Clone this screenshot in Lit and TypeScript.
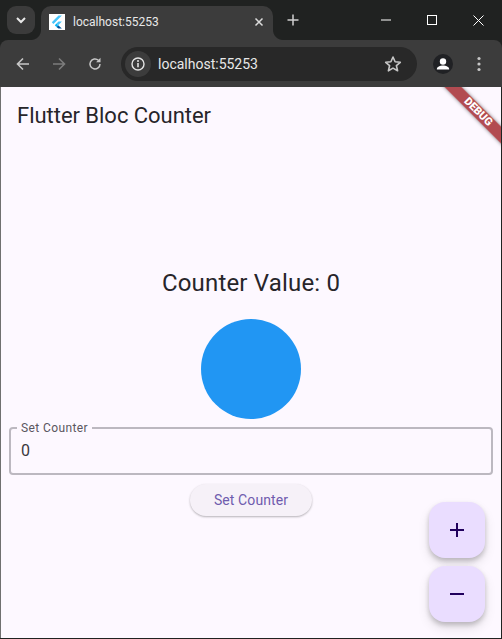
import { LitElement, html, css } from "lit";
import { customElement } from "lit/decorators.js";

@customElement("app-root")
export class AppRoot extends LitElement {
  static styles = css`
    :host { display: flex; flex-direction: column; width: 502px; height: 639px; overflow: hidden; box-sizing: border-box; background: #202221; font-family: Roboto, "Liberation Sans", sans-serif; }
    .titlebar { height: 40px; display: flex; align-items: flex-start; background: #202221; padding: 6px 1px 0 7px; box-sizing: border-box; flex: none; }
    .tabsearch { width: 28px; height: 28px; border-radius: 9px; background: #3b3b3b; display: flex; align-items: center; justify-content: center; margin-right: 6px; flex: none; }
    .tab { position: relative; width: 232px; height: 34px; background: #3c3c3c; border-radius: 10px 10px 0 0; display: flex; align-items: center; padding: 0 0 3px 8px; box-sizing: border-box; color: #e8e8e8; font-size: 12px; flex: none; }
    .tab::after { content: ""; position: absolute; right: -10px; bottom: 0; width: 10px; height: 10px; background: radial-gradient(circle at 100% 0, transparent 9.5px, #3c3c3c 10.5px); }
    .tab::before { content: ""; position: absolute; left: -10px; bottom: 0; width: 10px; height: 10px; background: radial-gradient(circle at 0 0, transparent 9.5px, #3c3c3c 10.5px); }
    .fav { width: 16px; height: 16px; margin-right: 8px; display: block; flex: none; }
    .tabtext { flex: 1; }
    .tabx { margin-right: 9px; display: block; }
    .newtab { margin: 8px 0 0 14px; display: block; flex: none; }
    .winbtns { margin: -6px 0 0 auto; display: flex; align-items: center; height: 40px; }
    .winbtn { width: 46px; height: 40px; display: flex; align-items: center; justify-content: center; }
    .toolbar { height: 47px; background: #3c3c3c; display: flex; align-items: center; flex: none; padding-left: 15px; border-radius: 8px 8px 0 0; box-sizing: border-box; }
    .navicon { display: block; margin-right: 20px; flex: none; }
    .omni { width: 296px; height: 34px; margin-left: -2px; background: #282828; border-radius: 17px; display: flex; align-items: center; padding-left: 4px; box-sizing: border-box; flex: none; }
    .info { width: 26px; height: 26px; border-radius: 50%; background: #3c3c3c; display: flex; align-items: center; justify-content: center; margin-right: 7px; flex: none; }
    .url { color: #e8e8e8; font-size: 14px; flex: 1; }
    .star { display: block; margin-right: 15px; flex: none; }
    .avatar { width: 20px; height: 20px; border-radius: 50%; background: #202124; margin-left: 16px; display: flex; align-items: center; justify-content: center; overflow: hidden; flex: none; }
    .dots { margin-left: 24px; display: block; flex: none; }
    .page { flex: 1; margin: 0 1px 1px 0; border-left: 1px solid #707070; background: #fdf8ff; display: flex; flex-direction: column; position: relative; overflow: hidden; }
    .appbar { height: 56px; display: flex; align-items: center; padding-left: 16px; font-size: 22px; letter-spacing: -.03px; color: #27252a; flex: none; }
    .body { display: flex; flex-direction: column; align-items: center; padding: 124px 8px 0; }
    .value { font-size: 24px; line-height: 32px; letter-spacing: .18px; color: #27252a; }
    .circle { width: 100px; height: 100px; border-radius: 50%; background: #2196f3; margin-top: 20px; }
    fieldset { width: 100%; box-sizing: border-box; margin: 2px 0 0; padding: 0 10px; height: 54px; border: 2px solid #bcb8c0; border-radius: 4px; min-width: 0; }
    legend { font-size: 12px; line-height: 14px; color: #5a5660; padding: 0 4px; margin-left: -4px; letter-spacing: .4px; }
    .input { font-size: 16px; line-height: 24px; color: #3a383d; margin-top: 4px; letter-spacing: .5px; }
    .btn { width: 122px; height: 32px; border-radius: 16px; background: #f6f1f8; color: #6f5cae; font-size: 14px; letter-spacing: .1px; display: flex; align-items: center; justify-content: center; margin-top: 9px; box-shadow: 0 1px 2px rgba(0,0,0,.22), 0 1px 3px rgba(0,0,0,.08); }
    .fabs { position: absolute; right: 16px; bottom: 16px; display: flex; flex-direction: column; gap: 8px; }
    .fab { width: 56px; height: 56px; border-radius: 16px; background: #eaddff; display: flex; align-items: center; justify-content: center; box-shadow: 0 3px 5px rgba(0,0,0,.2), 0 6px 12px rgba(0,0,0,.1); }
    .banner { position: absolute; left: 427px; top: 19px; width: 100px; height: 12px; background: rgba(165,45,50,.85); color: #fff; font: 900 11px/12px Roboto, sans-serif; text-align: center; transform: rotate(45deg); box-shadow: 0 0 4px rgba(0,0,0,.5); }
  `;

  render() {
    return html`
      <div class="titlebar">
        <div class="tabsearch">
          <svg width="12" height="12" viewBox="0 0 12 12"><path d="M2 4l4 4 4-4" fill="none" stroke="#e8e8e8" stroke-width="2"/></svg>
        </div>
        <div class="tab">
          <svg class="fav" viewBox="0 0 16 16">
            <rect width="16" height="16" fill="#fff"/>
            <path d="M9.5 1.5h3.4L6 8.4 4.4 10 2.8 8.3z" fill="#47c5fb"/>
            <path d="M9.5 7.6h3.4L9.2 11.3 7.5 9.6z" fill="#47c5fb"/>
            <path d="M7.5 13l1.7-1.7 3.7 3.2H9.4z" fill="#00569e"/>
            <path d="M5.8 11.3l1.7-1.7 1.7 1.7-1.7 1.7z" fill="#00b5f8"/>
          </svg>
          <span class="tabtext">localhost:55253</span>
          <svg class="tabx" width="10" height="10" viewBox="0 0 10 10"><path d="M1.5 1.5l7 7M8.5 1.5l-7 7" stroke="#dcdcdc" stroke-width="1.5"/></svg>
        </div>
        <svg class="newtab" width="12" height="12" viewBox="0 0 12 12"><path d="M6 .5v11M.5 6h11" stroke="#cfcfcf" stroke-width="1.5"/></svg>
        <div class="winbtns">
          <div class="winbtn"><svg width="10" height="10" viewBox="0 0 10 10"><path d="M0 5h10" stroke="#fff" stroke-width="1"/></svg></div>
          <div class="winbtn"><svg width="10" height="10" viewBox="0 0 10 10"><rect x=".5" y=".5" width="9" height="9" fill="none" stroke="#fff"/></svg></div>
          <div class="winbtn"><svg width="11" height="11" viewBox="0 0 11 11"><path d="M.5.5l10 10M10.5.5l-10 10" stroke="#fff" stroke-width="1"/></svg></div>
        </div>
      </div>
      <div class="toolbar">
        <svg class="navicon" width="16" height="16" viewBox="0 0 16 16"><path d="M14 8H3M8 2.5L2.5 8 8 13.5" fill="none" stroke="#c7c7c7" stroke-width="1.6"/></svg>
        <svg class="navicon" width="16" height="16" viewBox="0 0 16 16"><path d="M2 8h11M8 2.5L13.5 8 8 13.5" fill="none" stroke="#7c7c7c" stroke-width="1.6"/></svg>
        <svg class="navicon" width="16" height="16" viewBox="0 0 16 16"><path d="M13 8a5 5 0 1 1-1.6-3.7" fill="none" stroke="#c7c7c7" stroke-width="1.5"/><path d="M13.5 1.8v4.4H9.1z" fill="#c7c7c7"/></svg>
        <div class="omni">
          <div class="info"><svg width="16" height="16" viewBox="0 0 16 16"><circle cx="8" cy="8" r="6" fill="none" stroke="#e3e3e3" stroke-width="1.4"/><path d="M8 7v4.2" stroke="#e3e3e3" stroke-width="1.6"/><circle cx="8" cy="5" r="1" fill="#e3e3e3"/></svg></div>
          <span class="url">localhost:55253</span>
          <svg class="star" width="18" height="18" viewBox="0 0 18 18"><path d="M9 2l2.1 4.8 5.2.5-3.9 3.4 1.2 5.1L9 13.1l-4.6 2.7 1.2-5.1L1.7 7.3l5.2-.5z" fill="none" stroke="#c7c7c7" stroke-width="1.6" stroke-linejoin="round"/></svg>
        </div>
        <div class="avatar"><svg width="20" height="20" viewBox="0 0 20 20"><circle cx="10" cy="7.5" r="3.2" fill="#fff"/><path d="M3.8 15.5c0-3 3.4-4 6.2-4s6.2 1 6.2 4z" fill="#fff"/></svg></div>
        <svg class="dots" width="4" height="16" viewBox="0 0 4 16"><circle cx="2" cy="2.5" r="1.6" fill="#c7c7c7"/><circle cx="2" cy="8" r="1.6" fill="#c7c7c7"/><circle cx="2" cy="13.5" r="1.6" fill="#c7c7c7"/></svg>
      </div>
      <div class="page">
        <div class="appbar">Flutter Bloc Counter</div>
        <div class="body">
          <div class="value">Counter Value: 0</div>
          <div class="circle"></div>
          <fieldset>
            <legend>Set Counter</legend>
            <div class="input">0</div>
          </fieldset>
          <div class="btn">Set Counter</div>
        </div>
        <div class="fabs">
          <div class="fab"><svg width="24" height="24" viewBox="0 0 24 24"><path d="M19 13h-6v6h-2v-6H5v-2h6V5h2v6h6z" fill="#21005d"/></svg></div>
          <div class="fab"><svg width="24" height="24" viewBox="0 0 24 24"><path d="M19 13H5v-2h14z" fill="#21005d"/></svg></div>
        </div>
        <div class="banner">DEBUG</div>
      </div>
    `;
  }
}
